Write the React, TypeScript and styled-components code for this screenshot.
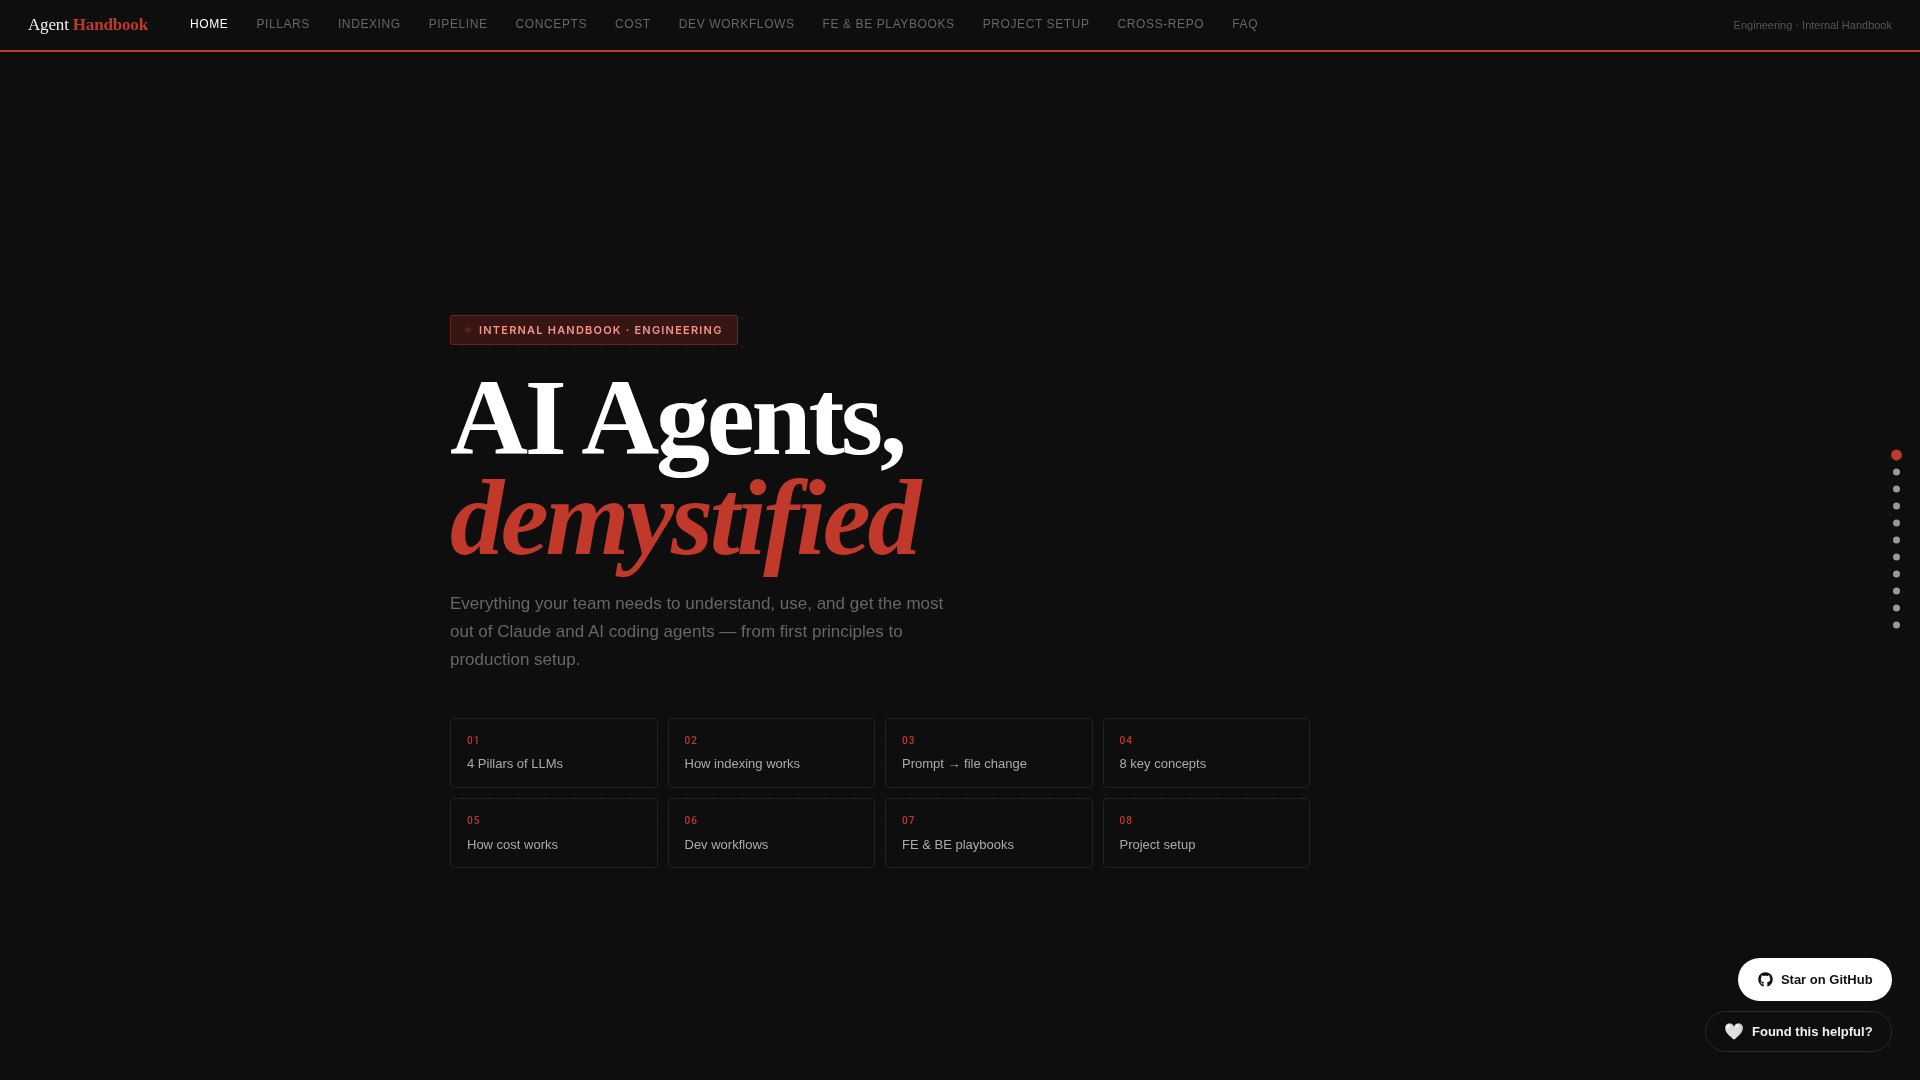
import styled, { createGlobalStyle } from 'styled-components';
import { FaGithub } from 'react-icons/fa';

const GlobalStyle = createGlobalStyle`
  * { box-sizing: border-box; }
  html, body { margin: 0; padding: 0; background: #0e0e0e; }
  body { font-family: "Liberation Sans", Arial, sans-serif; overflow: hidden; }
`;

const Nav = styled.nav`
  height: 52px;
  display: flex;
  align-items: center;
  padding: 0 28px;
  background: #0e0e0e;
  border-bottom: 2px solid #c0392b;
  will-change: transform;
`;

const Logo = styled.div`
  font-family: "Liberation Serif", "Times New Roman", serif;
  font-size: 17px;
  letter-spacing: -0.01em;
  color: #f0f0f0;
  margin-right: 42px;
  white-space: nowrap;

  span { color: #c0392b; font-weight: 700; }
`;

const NavLinks = styled.div`
  display: flex;
  gap: 28px;
  flex: 1;
  margin-top: -2px;
`;

const NavLink = styled.a<{ $active?: boolean }>`
  font-size: 12px;
  letter-spacing: 0.05em;
  white-space: nowrap;
  color: ${(p) => (p.$active ? '#ffffff' : '#666666')};
`;

const NavNote = styled.div`
  font-size: 11px;
  color: #555555;
  white-space: nowrap;
`;

const Main = styled.main`
  height: 1028px;
  background-color: #0e0e0e;
  background-image: radial-gradient(circle, #1a1a1a 1px, transparent 1px);
  background-size: 28px 28px;
  padding-top: 263px;
`;

const Hero = styled.section`
  width: 1020px;
  margin: 0 auto;
  will-change: transform;
`;

const Badge = styled.div`
  display: inline-flex;
  align-items: center;
  gap: 8px;
  height: 30px;
  padding: 0 14px;
  background: #361512;
  border: 1px solid #6b231c;
  border-radius: 2px;
  font-family: Inter, sans-serif;
  font-size: 11px;
  font-weight: 600;
  letter-spacing: 0.11em;
  color: #f1948a;
`;

const BadgeDot = styled.i`
  width: 6px;
  height: 6px;
  border-radius: 50%;
  background: #5e1f19;
`;

const Title = styled.h1`
  margin: 23px 0 0;
  font-family: "Liberation Serif", "Times New Roman", serif;
  font-size: 108px;
  line-height: 100px;
  font-weight: 700;
  letter-spacing: -0.03em;
  color: #ffffff;

  em { display: block; color: #c0392b; font-style: italic; }
`;

const Lead = styled.p`
  margin: 22px 0 0;
  width: 520px;
  font-size: 17px;
  line-height: 28px;
  color: #666666;
`;

const CardGrid = styled.div`
  display: grid;
  grid-template-columns: repeat(4, 1fr);
  gap: 10.4px 10px;
  width: 860px;
  margin-top: 44px;
`;

const Card = styled.div`
  height: 70px;
  padding: 16px;
  border: 1px solid #222222;
  border-radius: 4px;
  background: #0e0e0e;
`;

const CardNum = styled.div`
  font-family: Roboto, sans-serif;
  font-size: 10px;
  font-weight: 500;
  line-height: 12px;
  letter-spacing: 0.1em;
  color: #c0392b;
`;

const CardLabel = styled.div`
  margin-top: 9.2px;
  font-size: 13px;
  line-height: 16px;
  color: #aaaaaa;
`;

const SideDots = styled.div`
  position: fixed;
  top: 50%;
  right: 20px;
  transform: translateY(-50%);
  display: flex;
  flex-direction: column;
  align-items: center;
  gap: 10px;
`;

const SideDot = styled.i<{ $active?: boolean }>`
  width: 7px;
  height: 7px;
  border-radius: 50%;
  background: ${(p) => (p.$active ? '#c0392b' : '#999999')};
  transform: ${(p) => (p.$active ? 'scale(1.55)' : 'none')};
`;

const Floating = styled.div`
  position: fixed;
  right: 28px;
  bottom: 28px;
  display: flex;
  flex-direction: column;
  align-items: flex-end;
  gap: 10px;
  will-change: transform;
`;

const StarButton = styled.a`
  display: flex;
  align-items: center;
  gap: 8px;
  height: 43px;
  padding: 0 19px 0 20px;
  border-radius: 22px;
  background: #ffffff;
  color: #111111;
  font-size: 13px;
  font-weight: 700;
`;

const HelpButton = styled.a`
  display: flex;
  align-items: center;
  gap: 8px;
  height: 41px;
  padding: 0 18px;
  border: 1px solid #2a2a2a;
  border-radius: 21px;
  background: #0e0e0e;
  color: #f0f0f0;
  font-size: 13px;
  font-weight: 700;
`;

const HeartGlyph = styled.span`
  font-size: 16px;
  line-height: 1;
`;

const cards = [
  '4 Pillars of LLMs',
  'How indexing works',
  'Prompt → file change',
  '8 key concepts',
  'How cost works',
  'Dev workflows',
  'FE & BE playbooks',
  'Project setup',
];

const links = [
  'Home',
  'Pillars',
  'Indexing',
  'Pipeline',
  'Concepts',
  'Cost',
  'Dev Workflows',
  'FE & BE Playbooks',
  'Project Setup',
  'Cross-Repo',
  'FAQ',
];

export default function App() {
  return (
    <>
      <GlobalStyle />
      <Nav>
        <Logo>
          Agent <span>Handbook</span>
        </Logo>
        <NavLinks>
          {links.map((link, i) => (
            <NavLink key={link} $active={i === 0}>
              {link.toUpperCase()}
            </NavLink>
          ))}
        </NavLinks>
        <NavNote>Engineering · Internal Handbook</NavNote>
      </Nav>
      <Main>
        <Hero>
          <Badge>
            <BadgeDot />
            INTERNAL HANDBOOK · ENGINEERING
          </Badge>
          <Title>
            AI Agents,
            <em>demystified</em>
          </Title>
          <Lead>
            Everything your team needs to understand, use, and get the most out of Claude and AI
            coding agents — from first principles to production setup.
          </Lead>
          <CardGrid>
            {cards.map((label, i) => (
              <Card key={label}>
                <CardNum>{String(i + 1).padStart(2, '0')}</CardNum>
                <CardLabel>{label}</CardLabel>
              </Card>
            ))}
          </CardGrid>
        </Hero>
      </Main>
      <SideDots>
        {links.map((link, i) => (
          <SideDot key={link} $active={i === 0} />
        ))}
      </SideDots>
      <Floating>
        <StarButton>
          <FaGithub size={15} />
          Star on GitHub
        </StarButton>
        <HelpButton>
          <HeartGlyph>🤍</HeartGlyph>
          Found this helpful?
        </HelpButton>
      </Floating>
    </>
  );
}
